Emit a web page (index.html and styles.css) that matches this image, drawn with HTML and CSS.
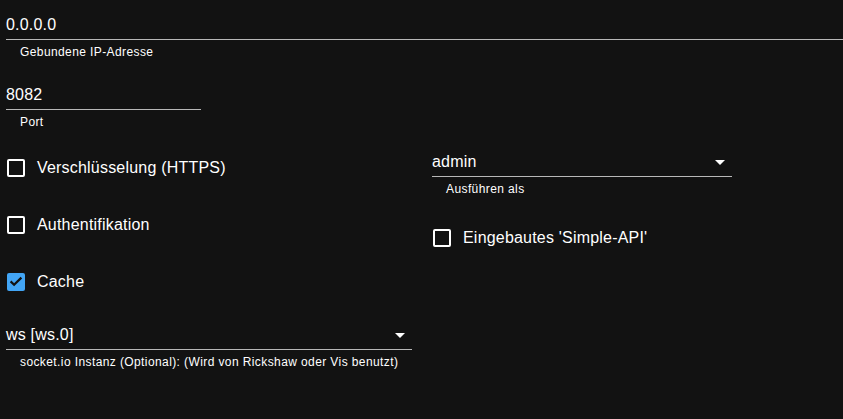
FILE: index.html
```html
<!DOCTYPE html>
<html lang="de">
<head>
<meta charset="utf-8">
<title>Einstellungen</title>
<link rel="stylesheet" href="styles.css">
</head>
<body>
<div class="page">
  <div class="field field-full">
    <div class="input">0.0.0.0</div>
    <div class="helper">Gebundene IP-Adresse</div>
  </div>
  <div class="field field-port">
    <div class="input">8082</div>
    <div class="helper">Port</div>
  </div>
  <div class="columns">
    <div class="col col-left">
      <div class="check-row">
        <span class="box"></span><span class="label">Verschlüsselung (HTTPS)</span>
      </div>
      <div class="check-row">
        <span class="box"></span><span class="label">Authentifikation</span>
      </div>
      <div class="check-row">
        <span class="box checked"><svg viewBox="0 0 18 18" width="18" height="18"><polyline points="3.6,8.4 7.1,11.8 14.4,4.6" fill="none" stroke="#121212" stroke-width="2.2"/></svg></span><span class="label">Cache</span>
      </div>
      <div class="field field-select field-ws">
        <div class="input select">ws [ws.0]<span class="arrow"></span></div>
        <div class="helper">socket.io Instanz (Optional): (Wird von Rickshaw oder Vis benutzt)</div>
      </div>
    </div>
    <div class="col col-right">
      <div class="field field-select field-admin">
        <div class="input select">admin<span class="arrow"></span></div>
        <div class="helper">Ausführen als</div>
      </div>
      <div class="check-row check-right">
        <span class="box"></span><span class="label">Eingebautes 'Simple-API'</span>
      </div>
    </div>
  </div>
</div>
</body>
</html>
```

FILE: styles.css
```css
html, body {
  margin: 0;
  padding: 0;
  background: #121212;
  height: 100%;
}
body {
  font-family: "Liberation Sans", Arial, sans-serif;
  color: #ffffff;
}
.page {
  padding: 10px 0 0 6px;
}
.field {
  display: flex;
  flex-direction: column;
}
.input {
  font-size: 16px;
  line-height: 19px;
  letter-spacing: 0.2px;
  padding: 5px 0 5px;
  border-bottom: 1px solid rgba(255, 255, 255, 0.7);
  color: #ffffff;
}
.helper {
  font-size: 12px;
  line-height: 14px;
  letter-spacing: 0.4px;
  margin-top: 5px;
  padding-left: 14px;
  color: #ffffff;
}
.field-port {
  width: 195px;
  margin-top: 21px;
}
.columns {
  display: flex;
  gap: 20px;
  margin-top: 10px;
}
.col {
  display: flex;
  flex-direction: column;
}
.col-left {
  width: 406px;
}
.col-right {
  width: 300px;
}
.check-row {
  display: flex;
  align-items: center;
  height: 57px;
  padding-left: 1px;
}
.box {
  box-sizing: border-box;
  position: relative;
  width: 18px;
  height: 18px;
  border: 2px solid #ffffff;
  border-radius: 2px;
  margin-right: 12px;
  flex: none;
}
.box.checked {
  background: #42a5f5;
  border: 0;
}
.box.checked svg {
  display: block;
  width: 18px;
  height: 18px;
}
.label {
  font-size: 16px;
  line-height: 19px;
  letter-spacing: 0.2px;
}
.select {
  position: relative;
}
.arrow {
  position: absolute;
  right: 7px;
  top: 13px;
  width: 0;
  height: 0;
  border-left: 5px solid transparent;
  border-right: 5px solid transparent;
  border-top: 5px solid #ffffff;
}
.field-ws {
  margin-top: 10px;
}
.field-admin {
  margin-top: 8px;
}
.check-right {
  margin-top: 13px;
}
```
